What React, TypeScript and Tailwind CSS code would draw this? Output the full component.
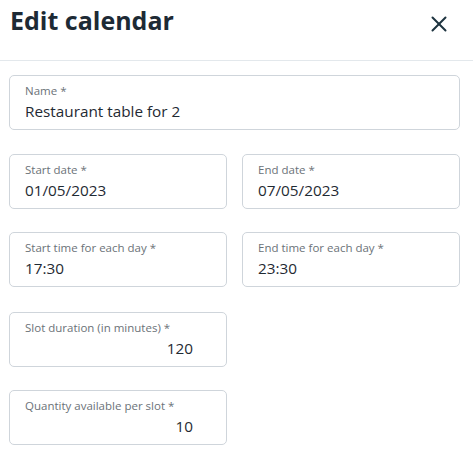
import { X } from "lucide-react";

type FieldProps = {
  label: string;
  value: string;
  numeric?: boolean;
};

function Field({ label, value, numeric }: FieldProps) {
  return (
    <div className="h-[55px] rounded-[5px] border border-[#cfd5db] bg-white pl-[15px] pt-[8px]">
      <div className="text-[11.5px] leading-[14px] text-[#6b7278]">{label}</div>
      <div
        className={`mt-[2px] text-[15.3px] leading-[22px] text-[#1f2a33] ${
          numeric ? "pr-[33px] text-right" : ""
        }`}
      >
        {value}
      </div>
    </div>
  );
}

export default function App() {
  return (
    <div className="h-[454px] w-[473px] bg-white font-['Open_Sans',sans-serif]">
      <div className="flex h-[61px] items-start justify-between border-b border-[#e3e8ec] pl-[10px] pr-[21px]">
        <h1 className="mt-[1px] text-[25px] font-bold leading-[38px] text-[#1d2a35]">Edit calendar</h1>
        <button className="mt-[11px] text-[#1e3440]">
          <X className="h-[26px] w-[26px]" strokeWidth={1.85} />
        </button>
      </div>

      <div className="pl-[9px] pr-[13px] pt-[14px]">
        <Field label="Name *" value="Restaurant table for 2" />

        <div className="mt-[24px] grid grid-cols-2 gap-x-[15px] gap-y-[23px]">
          <Field label="Start date *" value="01/05/2023" />
          <Field label="End date *" value="07/05/2023" />
          <Field label="Start time for each day *" value="17:30" />
          <Field label="End time for each day *" value="23:30" />
        </div>

        <div className="mt-[25px] w-[218px] space-y-[23px]">
          <Field label="Slot duration (in minutes) *" value="120" numeric />
          <Field label="Quantity available per slot *" value="10" numeric />
        </div>
      </div>
    </div>
  );
}
